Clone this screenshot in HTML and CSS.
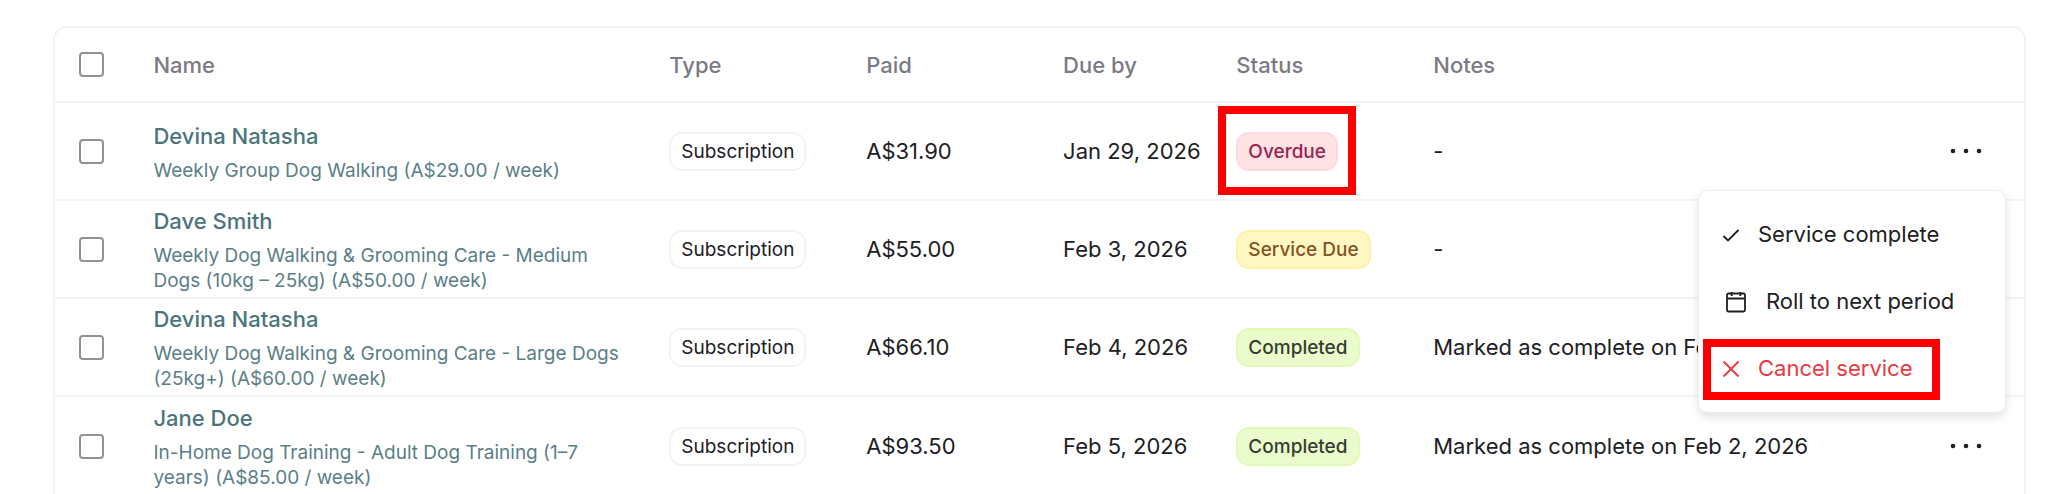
FILE: index.html
```html
<!DOCTYPE html>
<html lang="en">
<head>
<meta charset="utf-8">
<title>Services</title>
<link rel="stylesheet" href="styles.css">
</head>
<body>
<main class="page">
  <div class="card">
    <table class="services">
      <colgroup>
        <col class="col-select"><col class="col-name"><col class="col-type"><col class="col-paid"><col class="col-due"><col class="col-status"><col class="col-notes"><col class="col-actions">
      </colgroup>
      <thead>
        <tr>
          <th class="select"><input class="check" type="checkbox" aria-label="Select all"></th>
          <th>Name</th><th>Type</th><th>Paid</th><th>Due by</th><th>Status</th><th>Notes</th><th></th>
        </tr>
      </thead>
      <tbody>
        <tr>
          <td class="select"><input class="check" type="checkbox" aria-label="Select Devina Natasha, group walking"></td>
          <td><a class="client" href="#"><span class="client-name">Devina Natasha</span><span class="client-plan">Weekly Group Dog Walking (A$29.00 / week)</span></a></td>
          <td><span class="badge">Subscription</span></td>
          <td>A$31.90</td>
          <td>Jan 29, 2026</td>
          <td><span class="badge badge-overdue">Overdue<span class="marker marker-status"></span></span></td>
          <td>-</td>
          <td class="actions">
            <button class="more" type="button" aria-label="Actions" aria-expanded="true"><svg viewBox="0 0 36 36"><circle cx="5" cy="18" r="2.3"/><circle cx="18" cy="18" r="2.3"/><circle cx="31" cy="18" r="2.3"/></svg></button>
            <div class="menu">
              <button class="menu-item" type="button"><svg class="icon" viewBox="0 0 24 24"><path d="M4.500 13l4.500 4.500L19.500 7"/></svg>Service complete</button>
              <button class="menu-item menu-item-wide" type="button"><svg class="icon" viewBox="0 0 24 24"><rect x="3" y="3.500" width="18" height="18" rx="1.500"/><path d="M3 8.500h18M7.700 2v4M16.300 2v4"/></svg>Roll to next period</button>
              <button class="menu-item menu-item-danger" type="button"><svg class="icon" viewBox="0 0 24 24"><path d="M4.500 4.500l15 15M19.500 4.500l-15 15"/></svg>Cancel service<span class="marker marker-cancel"></span></button>
            </div>
          </td>
        </tr>
        <tr>
          <td class="select"><input class="check" type="checkbox" aria-label="Select Dave Smith"></td>
          <td><a class="client" href="#"><span class="client-name">Dave Smith</span><span class="client-plan">Weekly Dog Walking &amp; Grooming Care - Medium Dogs (10kg – 25kg) (A$50.00 / week)</span></a></td>
          <td><span class="badge">Subscription</span></td>
          <td>A$55.00</td>
          <td>Feb 3, 2026</td>
          <td><span class="badge badge-due">Service Due</span></td>
          <td>-</td>
          <td class="actions"><button class="more" type="button" aria-label="Actions"><svg viewBox="0 0 36 36"><circle cx="5" cy="18" r="2.3"/><circle cx="18" cy="18" r="2.3"/><circle cx="31" cy="18" r="2.3"/></svg></button></td>
        </tr>
        <tr>
          <td class="select"><input class="check" type="checkbox" aria-label="Select Devina Natasha, grooming care"></td>
          <td><a class="client" href="#"><span class="client-name">Devina Natasha</span><span class="client-plan">Weekly Dog Walking &amp; Grooming Care - Large Dogs (25kg+) (A$60.00 / week)</span></a></td>
          <td><span class="badge">Subscription</span></td>
          <td>A$66.10</td>
          <td>Feb 4, 2026</td>
          <td><span class="badge badge-done">Completed</span></td>
          <td>Marked as complete on Feb 2, 2026</td>
          <td class="actions"><button class="more" type="button" aria-label="Actions"><svg viewBox="0 0 36 36"><circle cx="5" cy="18" r="2.3"/><circle cx="18" cy="18" r="2.3"/><circle cx="31" cy="18" r="2.3"/></svg></button></td>
        </tr>
        <tr>
          <td class="select"><input class="check" type="checkbox" aria-label="Select Jane Doe"></td>
          <td><a class="client" href="#"><span class="client-name">Jane Doe</span><span class="client-plan">In-Home Dog Training - Adult Dog Training (1–7 years) (A$85.00 / week)</span></a></td>
          <td><span class="badge">Subscription</span></td>
          <td>A$93.50</td>
          <td>Feb 5, 2026</td>
          <td><span class="badge badge-done">Completed</span></td>
          <td>Marked as complete on Feb 2, 2026</td>
          <td class="actions"><button class="more" type="button" aria-label="Actions"><svg viewBox="0 0 36 36"><circle cx="5" cy="18" r="2.3"/><circle cx="18" cy="18" r="2.3"/><circle cx="31" cy="18" r="2.3"/></svg></button></td>
        </tr>
      </tbody>
    </table>
  </div>
</main>
</body>
</html>
```
FILE: styles.css
```css
* { box-sizing: border-box; }

body {
  margin: 0;
  height: 100vh;
  overflow: hidden;
  background: #fff;
  color: #202024;
  font: 400 22px/28px Inter, "Liberation Sans", sans-serif;
}

.page { padding: 26px 22px 0 53px; }

.card {
  border: 2px solid #f3f3f4;
  border-bottom: 0;
  border-radius: 14px 14px 0 0;
}

.services {
  width: 100%;
  table-layout: fixed;
  border-collapse: separate;
  border-spacing: 0;
}

.col-select { width: 5%; }
.col-name { width: 26.2%; }
.col-type, .col-paid, .col-status { width: 10%; }
.col-due { width: 8.8%; }
.col-actions { width: 116px; }

th, td {
  padding: 0;
  text-align: left;
  vertical-align: middle;
  white-space: nowrap;
}

th {
  height: 75px;
  border-bottom: 2px solid #f3f3f4;
  color: #7b7b84;
  font-weight: 500;
}

td { height: 98px; border-bottom: 2px solid #f3f3f4; }
tr:last-child td { border-bottom: 0; }

.services .select { padding-left: 24px; }

.check {
  display: block;
  appearance: none;
  width: 25px;
  height: 25px;
  margin: 0;
  border: 2px solid #929292;
  border-radius: 4px;
  background: #fff;
}

.client {
  display: flex;
  flex-direction: column;
  gap: 9px;
  max-width: 480px;
  padding-top: 3px;
  color: #4b757b;
  text-decoration: none;
  white-space: normal;
}
.client-name { font-weight: 500; line-height: 26px; }
.client-plan { font-size: 19px; line-height: 25px; color: #5a8086; }

.badge {
  display: inline-block;
  position: relative;
  padding: 0 10px;
  border: 2px solid #f3f3f4;
  border-radius: 13px;
  font-size: 19px;
  line-height: 35px;
  vertical-align: middle;
}
.badge-overdue { background: #ffe2e4; border-color: #ffdadd; color: #9b2350; font-weight: 500; }
.badge-due { background: #fff8c2; border-color: #fff2a8; color: #85531f; font-weight: 500; }
.badge-done { background: #eafccb; border-color: #e2fab8; color: #353d33; font-weight: 500; }

.services .actions { position: relative; text-align: center; }

.more {
  display: inline-flex;
  padding: 0;
  border: 0;
  background: none;
  vertical-align: middle;
}
.more svg { width: 36px; height: 36px; fill: #202024; }

.menu {
  position: absolute;
  z-index: 2;
  top: 87px;
  right: 18px;
  width: 308px;
  padding: 10px 0;
  border: 1px solid #eeeeef;
  border-radius: 10px;
  background: #fff;
  box-shadow: 0 4px 10px rgba(0, 0, 0, .12);
}

.menu-item {
  display: flex;
  position: relative;
  align-items: center;
  gap: 15px;
  width: 100%;
  padding: 20px;
  border: 0;
  background: none;
  color: inherit;
  font: inherit;
  line-height: 27px;
  text-align: left;
}
.menu-item-wide { gap: 18px; padding-left: 25px; }
.menu-item-danger { color: #e53a3f; }

.icon {
  width: 24px;
  height: 24px;
  fill: none;
  stroke: currentColor;
  stroke-width: 1.8;
}

.marker {
  position: absolute;
  border: 8px solid #f00;
  pointer-events: none;
}
.marker-status { inset: -28px -20px -26px -20px; }
.marker-cancel { inset: 4px 65px 2px 4px; }
```
